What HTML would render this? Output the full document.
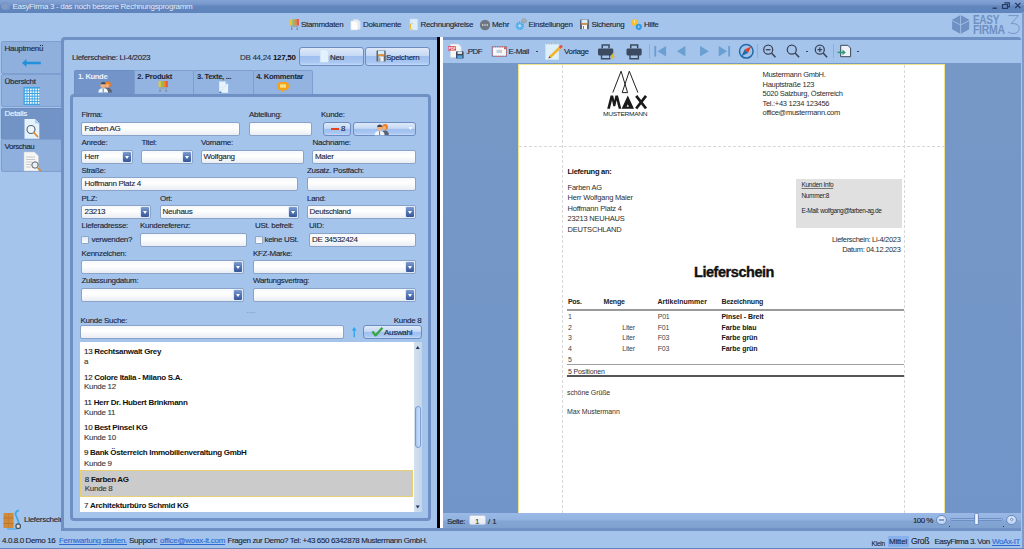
<!DOCTYPE html>
<html><head><meta charset="utf-8">
<style>
*,*::before,*::after{box-sizing:border-box}
html,body{margin:0;padding:0}
body{width:1024px;height:549px;overflow:hidden;position:relative;background:#a5c4ec;font-family:"Liberation Sans",sans-serif;font-size:8px;letter-spacing:-0.3px;color:#1c2636}
.a{position:absolute}
.t{position:absolute;line-height:10px;white-space:nowrap;-webkit-text-stroke:0.12px currentColor}
.b,b{font-weight:bold;-webkit-text-stroke:0}
.inp{position:absolute;height:14px;border:1px solid #89a3c9;border-radius:2px;background:linear-gradient(#f6f8fc,#ffffff 40%,#e9edf3)}
.cmb{position:absolute;height:14px;border:1px solid #89a3c9;border-radius:2px;background:linear-gradient(#f6f8fc,#ffffff 40%,#e9edf3)}
.cmb:after{content:"";position:absolute;right:0;top:0;width:10px;height:12px;background:linear-gradient(#7c9cd2,#5676b3 50%,#36569a);border:1px solid #dfe8f6;border-radius:2px}
.cmb:before{content:"";position:absolute;right:2.7px;top:5px;width:0;height:0;border-left:2.5px solid transparent;border-right:2.5px solid transparent;border-top:3px solid #fff;z-index:2}
.btn{position:absolute;border:1px solid #6d8dc2;border-radius:3px;background:linear-gradient(#dfe9f8,#c5d9f5 45%,#9fbff0 50%,#a9c7f2 85%,#c4daf7)}
.nav{position:absolute;left:1px;width:61px;height:33px;border:1px solid #7e9fd0;background:#8fafdd;border-radius:2px}
.ftab{position:absolute;top:70px;height:24px;border:1px solid #7d9dcf;border-bottom:none;background:#93b3e1;border-radius:2px 2px 0 0}
.pg{color:#2d2d2d;-webkit-text-stroke:0}
</style></head><body>

<!-- title bar -->
<div class="a" style="left:0;top:0;width:1024px;height:13px;background:linear-gradient(#84a3d5,#7898cc 32%,#6386be 48%,#5f83bb)"></div>
<div class="a" style="left:2px;top:2px;width:8px;height:8px;border-radius:50%;background:#7d9acb"></div>
<div class="t" style="left:12.5px;top:2px;color:#e2eaf6;-webkit-text-stroke:0">EasyFirma 3 - das noch bessere Rechnungsprogramm</div>
<!-- window controls -->
<svg class="a" style="left:988px;top:0" width="36" height="12" viewBox="988 0 36 12">
 <path d="M992.5 8.2 L996.8 8.2" stroke="#22395f" stroke-width="1.3"/>
 <path d="M1004.3 2.9 L1009.3 2.9 L1009.3 6.9 L1007.9 6.9" stroke="#22395f" stroke-width="1.1" fill="none"/>
 <rect x="1002.5" y="4.6" width="5" height="3.8" stroke="#22395f" stroke-width="1.1" fill="none"/>
 <path d="M1015.2 2.9 L1020.4 8.1 M1020.4 2.9 L1015.2 8.1" stroke="#22395f" stroke-width="1.3"/>
</svg>
<!-- right border -->
<div class="a" style="left:1022px;top:12px;width:2px;height:537px;background:#7b9bcc"></div>

<!-- menubar -->
<div class="t" style="left:301px;top:20.2px">Stammdaten</div>
<div class="t" style="left:363px;top:20.2px">Dokumente</div>
<div class="t" style="left:420.5px;top:20.2px;letter-spacing:-0.38px">Rechnungkreise</div>
<div class="t" style="left:492px;top:20.2px">Mehr</div>
<div class="t" style="left:528.5px;top:20.2px">Einstellungen</div>
<div class="t" style="left:591.5px;top:20.2px;letter-spacing:-0.35px">Sicherung</div>
<div class="t" style="left:644px;top:20.2px">Hilfe</div>

<!-- left nav -->
<div class="nav" style="top:41px"></div>
<div class="nav" style="top:74px"></div>
<div class="nav" style="top:107.5px;height:32px;background:#7293c6;border-color:#6a8bbf"></div>
<div class="nav" style="top:139px"></div>
<div class="t" style="left:4.5px;top:44px">Hauptmen<span style="position:relative">u<i style="position:absolute;left:0.9px;top:0.6px;width:1px;height:1px;background:#1c2636"></i><i style="position:absolute;left:2.9px;top:0.6px;width:1px;height:1px;background:#1c2636"></i></span></div>
<div class="t" style="left:4.5px;top:76.5px">Übersicht</div>
<div class="t" style="left:4.5px;top:109px;color:#f2f6fc">Details</div>
<div class="t" style="left:4.5px;top:141.5px;letter-spacing:-0.45px">Vorschau</div>
<div class="t" style="left:24px;top:514.5px">Lieferschein</div>

<!-- outer panel -->
<div class="a" style="left:61px;top:37px;width:390px;height:494px;border:3px solid #6f90c4;border-right:none;border-radius:4px 0 0 4px;background:#a5c4ec"></div>
<div class="t" style="left:72px;top:52.5px">Lieferscheine: Li-4/2023</div>
<div class="t" style="left:240px;top:52.5px;color:#2b3445">DB 44,24 <b style="color:#111">127,50</b></div>
<div class="btn" style="left:299px;top:47px;width:65px;height:19px"></div>
<div class="t" style="left:330px;top:52.5px">Neu</div>
<div class="btn" style="left:365px;top:47px;width:65px;height:19px"></div>
<div class="t" style="left:386px;top:52.5px">Speichern</div>

<!-- form tabs -->
<div class="ftab" style="left:74px;width:61px;top:69.5px;background:#7394c8;border-color:#6d8ec2;height:25px"></div>
<div class="ftab" style="left:134px;width:60px"></div>
<div class="ftab" style="left:193px;width:61px"></div>
<div class="ftab" style="left:253px;width:60px"></div>
<div class="t b" style="left:78px;top:71.6px;font-size:7.6px;letter-spacing:-0.35px;color:#eaf2ff">1. Kunde</div>
<div class="t b" style="left:137.3px;top:71.6px;font-size:7.6px;letter-spacing:-0.25px">2. Produkt</div>
<div class="t b" style="left:197px;top:71.6px;font-size:7.6px;letter-spacing:-0.33px">3. Texte, ...</div>
<div class="t b" style="left:256.2px;top:71.6px;font-size:7.6px;letter-spacing:-0.3px">4. Kommentar</div>

<!-- inner panel -->
<div class="a" style="left:70px;top:94px;width:361px;height:427px;border:3px solid #6f90c4;border-radius:4px;background:#a5c4ec"></div>


<!-- form labels -->
<div class="t" style="left:81.5px;top:109.8px">Firma:</div>
<div class="t" style="left:249px;top:109.8px">Abteilung:</div>
<div class="t" style="left:321px;top:109.8px">Kunde:</div>
<div class="inp" style="left:81px;top:122px;width:159px"></div>
<div class="t" style="left:84.5px;top:124.3px">Farben AG</div>
<div class="inp" style="left:248.5px;top:122px;width:63px"></div>
<div class="btn" style="left:323px;top:122px;width:28px;height:14px"></div>
<div class="a" style="left:330.5px;top:127.5px;width:8px;height:2px;background:#e2441e"></div>
<div class="t" style="left:341px;top:124.3px">8</div>
<div class="btn" style="left:353px;top:122px;width:63px;height:14px"></div>
<div class="t" style="left:81.5px;top:137.8px">Anrede:</div>
<div class="t" style="left:141.5px;top:137.8px">Titel:</div>
<div class="t" style="left:201px;top:137.8px">Vorname:</div>
<div class="t" style="left:312.5px;top:137.8px">Nachname:</div>
<div class="cmb" style="left:81px;top:150px;width:52px"></div>
<div class="t" style="left:84.5px;top:152.3px">Herr</div>
<div class="cmb" style="left:141px;top:150px;width:52px"></div>
<div class="inp" style="left:200.5px;top:150px;width:103px"></div>
<div class="t" style="left:203.5px;top:152.3px">Wolfgang</div>
<div class="inp" style="left:312px;top:150px;width:104px"></div>
<div class="t" style="left:315px;top:152.3px">Maier</div>
<div class="t" style="left:81.5px;top:165.8px">Straße:</div>
<div class="t" style="left:307px;top:165.8px">Zusatz. Postfach:</div>
<div class="inp" style="left:81px;top:177px;width:217px"></div>
<div class="t" style="left:84.5px;top:179.3px">Hoffmann Platz 4</div>
<div class="inp" style="left:306.5px;top:177px;width:109px"></div>
<div class="t" style="left:81.5px;top:193.8px">PLZ:</div>
<div class="t" style="left:160px;top:193.8px">Ort:</div>
<div class="t" style="left:307px;top:193.8px">Land:</div>
<div class="cmb" style="left:81px;top:205px;width:70px"></div>
<div class="t" style="left:84.5px;top:207.3px">23213</div>
<div class="cmb" style="left:159.5px;top:205px;width:139px"></div>
<div class="t" style="left:162.5px;top:207.3px">Neuhaus</div>
<div class="cmb" style="left:306.5px;top:205px;width:109px"></div>
<div class="t" style="left:309.5px;top:207.3px">Deutschland</div>
<div class="t" style="left:81.5px;top:220.8px">Lieferadresse:</div>
<div class="t" style="left:140px;top:220.8px">Kundereferenz:</div>
<div class="t" style="left:255px;top:220.8px">USt. befreit:</div>
<div class="t" style="left:309px;top:220.8px">UID:</div>
<div class="a" style="left:81px;top:236px;width:8px;height:8px;border:1px solid #8ea6c8;border-radius:1px;background:linear-gradient(#e3e9f2,#fbfcfe)"></div>
<div class="t" style="left:91.5px;top:235.3px">verwenden?</div>
<div class="inp" style="left:139.5px;top:233px;width:107.5px"></div>
<div class="a" style="left:255px;top:236px;width:8px;height:8px;border:1px solid #8ea6c8;border-radius:1px;background:linear-gradient(#e3e9f2,#fbfcfe)"></div>
<div class="t" style="left:264.5px;top:235.3px">keine USt.</div>
<div class="inp" style="left:309px;top:233px;width:106.5px"></div>
<div class="t" style="left:312px;top:235.3px">DE 34532424</div>
<div class="t" style="left:81.5px;top:248.8px">Kennzeichen:</div>
<div class="t" style="left:253px;top:248.8px">KFZ-Marke:</div>
<div class="cmb" style="left:81px;top:260px;width:163px"></div>
<div class="cmb" style="left:252.5px;top:260px;width:163px"></div>
<div class="t" style="left:81.5px;top:275.8px">Zulassungdatum:</div>
<div class="t" style="left:253px;top:275.8px">Wartungsvertrag:</div>
<div class="cmb" style="left:81px;top:288px;width:163px"></div>
<div class="cmb" style="left:252.5px;top:288px;width:163px"></div>

<div class="t" style="left:246.5px;top:305.6px;color:#7b8ca6;letter-spacing:0">....</div>

<div class="t" style="left:80.5px;top:315.7px">Kunde Suche:</div>
<div class="t" style="left:421.5px;top:315.7px;transform:translateX(-100%)">Kunde 8</div>
<div class="inp" style="left:79.5px;top:325px;width:264px"></div>
<div class="btn" style="left:363px;top:325px;width:59px;height:14px"></div>
<div class="t" style="left:384px;top:327.7px">Auswahl</div>

<!-- list -->
<div class="a" style="left:80px;top:342px;width:341.5px;height:170px;background:#fff;overflow:hidden">
  <div class="a" style="left:334px;top:0;width:7.5px;height:170px;background:linear-gradient(90deg,#d3e0ee,#c5d6ea)"></div>
  <div class="a" style="left:335px;top:64px;width:5.5px;height:42px;border:1px solid #7a9bd0;border-radius:3px;background:linear-gradient(90deg,#a9c6f0,#cfe0f7)"></div>
  <div class="a" style="left:0;top:128.2px;width:333px;height:27px;background:#cbcbcb;border:1px solid #e8cf74"></div>
  <div class="t" style="left:4.0px;top:4.8px;color:#222">13 <b style="color:#111">Rechtsanwalt Grey</b></div>
  <div class="t" style="left:4.0px;top:14.8px;color:#3a3a3a">a</div>
  <div class="t" style="left:4.0px;top:30.8px;color:#222">12 <b style="color:#111">Colore Italia - Milano S.A.</b></div>
  <div class="t" style="left:4.0px;top:39.8px;color:#3a3a3a">Kunde 12</div>
  <div class="t" style="left:4.0px;top:55.8px;color:#222">11 <b style="color:#111">Herr Dr. Hubert Brinkmann</b></div>
  <div class="t" style="left:4.0px;top:65.8px;color:#3a3a3a">Kunde 11</div>
  <div class="t" style="left:4.0px;top:80.8px;color:#222">10 <b style="color:#111">Best Pinsel KG</b></div>
  <div class="t" style="left:4.0px;top:90.8px;color:#3a3a3a">Kunde 10</div>
  <div class="t" style="left:4.0px;top:105.8px;color:#222">9 <b style="color:#111">Bank Österreich Immobilienveraltung GmbH</b></div>
  <div class="t" style="left:4.0px;top:116.8px;color:#3a3a3a">Kunde 9</div>
  <div class="t" style="left:4.8px;top:132.8px;color:#222">8 <b style="color:#111">Farben AG</b></div>
  <div class="t" style="left:4.8px;top:141.8px;color:#3a3a3a">Kunde 8</div>
  <div class="t" style="left:4.0px;top:158.8px;color:#222">7 <b style="color:#111">Architekturbüro Schmid KG</b></div>
  <div class="t" style="left:4.0px;top:167.8px;color:#3a3a3a">Kunde 7</div>
</div>

<!-- right panel -->
<div class="a" style="left:437px;top:37px;width:3px;height:491px;background:#000"></div>
<div class="a" style="left:440px;top:37px;width:3px;height:491px;background:#fff"></div>
<div class="a" style="left:443px;top:37px;width:578px;height:3px;background:#6f90c4;border-radius:0 3px 0 0"></div>
<div class="a" style="left:443px;top:63px;width:578px;height:450px;background:linear-gradient(#7698c7,#7195c8)"></div>
<div class="a" style="left:518px;top:64px;width:427px;height:449px;background:#fff;border:1px solid #f2e48e;border-bottom:none"></div>

<!-- document -->
<div class="a" style="left:562px;top:65px;width:0;height:448px;border-left:1px dashed #d8d8d8"></div>
<div class="a" style="left:904px;top:65px;width:0;height:448px;border-left:1px dashed #d8d8d8"></div>
<div class="a" style="left:519px;top:146px;width:426px;height:0;border-top:1px dashed #d8d8d8"></div>
<div class="t pg" style="left:762.5px;top:70px;font-size:7.5px;line-height:9.6px;letter-spacing:-0.28px">Mustermann GmbH.<br>Hauptstraße 123<br>5020 Salzburg, Österreich<br>Tel.:+43 1234 123456<br>office@mustermann.com</div>
<div class="t pg b" style="left:567.5px;top:167px;font-size:7.5px;letter-spacing:-0.27px;color:#111">Lieferung an:</div>
<div class="t pg" style="left:567.5px;top:182.5px;font-size:7.5px;line-height:10.55px;letter-spacing:-0.2px">Farben AG<br>Herr Wolfgang Maier<br>Hoffmann Platz 4<br>23213 NEUHAUS<br>DEUTSCHLAND</div>
<div class="a" style="left:796px;top:179px;width:106px;height:49px;background:#e0e0e0"></div>
<div class="t" style="-webkit-text-stroke:0;left:801.5px;top:179.6px;font-size:6.5px;letter-spacing:-0.3px;color:#222;text-decoration:underline;text-decoration-thickness:0.6px;text-decoration-color:#777;text-underline-offset:1px">Kunden Info</div>
<div class="t" style="-webkit-text-stroke:0;left:801.5px;top:191px;font-size:6.5px;letter-spacing:-0.35px;color:#222">Nummer:8</div>
<div class="t" style="-webkit-text-stroke:0;left:801.5px;top:206.4px;font-size:6.5px;letter-spacing:-0.4px;color:#222">E-Mail: wolfgang@farben-ag.de</div>
<div class="t pg" style="left:900.5px;top:234.5px;font-size:7.5px;line-height:10.7px;letter-spacing:-0.32px;text-align:right;transform:translateX(-100%)">Lieferschein: Li-4/2023<br>Datum: 04.12.2023</div>
<div class="t" style="left:694px;top:263.5px;font-size:14.5px;font-weight:bold;line-height:16px;letter-spacing:-0.45px;color:#111;-webkit-text-stroke:0.35px #111">Lieferschein</div>
<div class="t b" style="left:568px;top:296.5px;font-size:7px;letter-spacing:-0.3px;color:#222">Pos.</div>
<div class="t b" style="left:603.5px;top:296.5px;font-size:7px;letter-spacing:-0.2px;color:#222">Menge</div>
<div class="t b" style="left:657.5px;top:296.5px;font-size:7px;letter-spacing:0px;color:#222">Artikelnummer</div>
<div class="t b" style="left:721.5px;top:296.5px;font-size:7px;letter-spacing:-0.18px;color:#222">Bezeichnung</div>
<div class="a" style="left:567px;top:309px;width:337px;height:2px;background:#9a9a9a"></div>
<div class="t pg" style="left:568px;top:311.8px;font-size:7px;color:#444">1</div>
<div class="t pg" style="left:657.7px;top:311.8px;font-size:7px;color:#444;letter-spacing:-0.2px">P01</div>
<div class="t b" style="left:721.5px;top:311.8px;font-size:7px;color:#151515;letter-spacing:-0.05px">Pinsel - Breit</div>
<div class="t pg" style="left:568px;top:322.5px;font-size:7px;color:#444">2</div>
<div class="t pg" style="left:622.3px;top:322.5px;font-size:7px;color:#444;letter-spacing:-0.2px">Liter</div>
<div class="t pg" style="left:657.7px;top:322.5px;font-size:7px;color:#444;letter-spacing:-0.2px">F01</div>
<div class="t b" style="left:721.5px;top:322.5px;font-size:7px;color:#151515;letter-spacing:-0.05px">Farbe blau</div>
<div class="t pg" style="left:568px;top:333.3px;font-size:7px;color:#444">3</div>
<div class="t pg" style="left:622.3px;top:333.3px;font-size:7px;color:#444;letter-spacing:-0.2px">Liter</div>
<div class="t pg" style="left:657.7px;top:333.3px;font-size:7px;color:#444;letter-spacing:-0.2px">F03</div>
<div class="t b" style="left:721.5px;top:333.3px;font-size:7px;color:#151515;letter-spacing:-0.05px">Farbe grün</div>
<div class="t pg" style="left:568px;top:344.0px;font-size:7px;color:#444">4</div>
<div class="t pg" style="left:622.3px;top:344.0px;font-size:7px;color:#444;letter-spacing:-0.2px">Liter</div>
<div class="t pg" style="left:657.7px;top:344.0px;font-size:7px;color:#444;letter-spacing:-0.2px">F03</div>
<div class="t b" style="left:721.5px;top:344.0px;font-size:7px;color:#151515;letter-spacing:-0.05px">Farbe grün</div>
<div class="t pg" style="left:568px;top:354.8px;font-size:7px;color:#444">5</div>
<div class="a" style="left:567px;top:364px;width:337px;height:1px;background:#a0a0a0"></div>
<div class="t pg" style="left:568px;top:366.5px;font-size:7px;letter-spacing:-0.15px;color:#333">5 Positionen</div>
<div class="a" style="left:567px;top:375px;width:337px;height:2px;background:#555"></div>
<div class="t pg" style="left:567px;top:388px;font-size:7px;letter-spacing:-0.1px;color:#333">schöne Grüße</div>
<div class="t pg" style="left:567px;top:407.3px;font-size:7px;letter-spacing:-0.1px;color:#333">Max Mustermann</div>
<div class="a" style="left:443px;top:513px;width:578px;height:15px;background:linear-gradient(#9ab9e6,#92b2e0 45%,#83a5d3 55%,#7ea1cf)"></div>
<div class="a" style="left:61px;top:528px;width:960px;height:3px;background:#6f90c4"></div>
<div class="a" style="left:0;top:548px;width:1024px;height:1px;background:#6284bb"></div>


<!-- right toolbar texts -->
<div class="t" style="left:466px;top:47.3px;letter-spacing:-0.55px">.PDF</div>
<div class="t" style="left:508.5px;top:47.3px;letter-spacing:-0.4px">E-Mail</div>
<div class="a" style="left:536px;top:51px;width:2px;height:1px;background:#3a4a60"></div>
<div class="t" style="left:564px;top:47.3px;letter-spacing:-0.35px">Vorlage</div>
<div class="a" style="left:806px;top:51px;width:2px;height:1px;background:#3a4a60"></div>
<div class="a" style="left:857px;top:51px;width:2px;height:1px;background:#3a4a60"></div>
<div class="a" style="left:649px;top:44px;width:1px;height:14px;background:#8eacd8"></div>
<div class="a" style="left:757px;top:44px;width:1px;height:14px;background:#8eacd8"></div>
<div class="a" style="left:833px;top:44px;width:1px;height:14px;background:#8eacd8"></div>

<!-- status strip -->
<div class="t" style="left:447px;top:516.5px;font-size:8px;letter-spacing:-0.4px">Seite:</div>
<div class="a" style="left:468.5px;top:515px;width:17px;height:10px;border:1px solid #b9cbe3;border-radius:2px;background:linear-gradient(#f4f6fa,#e6eaf0)"></div>
<div class="t" style="left:475px;top:516.5px;font-size:8px;color:#444">1</div>
<div class="t" style="left:488px;top:516.5px;font-size:8px;letter-spacing:-0.1px">/ 1</div>
<div class="t" style="left:913px;top:516px;font-size:8px;letter-spacing:-0.6px">100 %</div>
<div class="a" style="left:936.4px;top:514.6px;width:10.6px;height:10.6px;border-radius:50%;border:1px solid #6d8dc4;background:radial-gradient(circle at 50% 35%,#eef4fc,#b8cff0 70%,#9ab8e6)"></div>
<div class="a" style="left:939.2px;top:519.4px;width:5px;height:1.2px;background:#7f9cc8"></div>
<div class="a" style="left:949.7px;top:518px;width:53.3px;height:3.2px;border-radius:2px;border:1px solid #6f8fc4;background:#98b6e2"></div>
<div class="a" style="left:949px;top:525.5px;width:1px;height:1px;background:#333"></div>
<div class="a" style="left:1002.5px;top:525.5px;width:1px;height:1px;background:#333"></div>
<div class="a" style="left:974.4px;top:513.3px;width:4.4px;height:11.5px;border:1px solid #7391c6;border-radius:1.5px;background:linear-gradient(90deg,#c9dbf5,#f2f7fd,#c9dbf5)"></div>
<div class="a" style="left:1006px;top:514.6px;width:10.6px;height:10.6px;border-radius:50%;border:1px solid #6d8dc4;background:radial-gradient(circle at 50% 35%,#eef4fc,#b8cff0 70%,#9ab8e6)"></div>
<div class="a" style="left:1009.6px;top:518.2px;width:3.4px;height:3.4px;border:1px solid #7f9cc8;background:#f4f8fd;transform:rotate(45deg)"></div>

<!-- bottom status bar -->
<div class="t" style="left:2px;top:536px;font-size:8px;letter-spacing:-0.39px">4.0.8.0 Demo 16</div>
<div class="t" style="left:59px;top:536px;font-size:8px;letter-spacing:-0.29px;color:#2e6ad2;text-decoration:underline">Fernwartung starten.</div>
<div class="t" style="left:129px;top:536px;font-size:8px;letter-spacing:-0.23px">Support:</div>
<div class="t" style="left:160px;top:536px;font-size:8px;letter-spacing:-0.26px;color:#2e6ad2;text-decoration:underline">office@woax-it.com</div>
<div class="t" style="left:227.5px;top:536px;font-size:8px;letter-spacing:-0.38px">Fragen zur Demo? Tel: +43 650 6342878 Mustermann GmbH.</div>
<div class="a" style="left:887.5px;top:535.5px;width:21px;height:11.5px;background:#87b1ea"></div>
<div class="t" style="left:871.5px;top:538.5px;font-size:6.5px;letter-spacing:-0.19px">Klein</div>
<div class="t" style="left:889px;top:537px;font-size:8px;letter-spacing:-0.18px">Mittel</div>
<div class="t" style="left:911px;top:536px;font-size:8.6px;letter-spacing:-0.35px">Groß</div>
<div class="t" style="left:934.5px;top:537px;font-size:8px;letter-spacing:-0.5px">EasyFirma 3. Von</div>
<div class="t" style="left:992px;top:537px;font-size:8px;letter-spacing:-0.42px;color:#2e6ad2;text-decoration:underline">WoAx-IT</div>

<svg class="a" style="left:0;top:0" width="1024" height="549" viewBox="0 0 1024 549">
<!-- title app icon -->
<circle cx="4.8" cy="6.2" r="3.6" fill="#7f9bc6" stroke="#7390bf" stroke-width="0.6"/>
<!-- menubar icons -->
<g>
 <rect x="290" y="19.5" width="2.3" height="6" fill="#f1c232"/><rect x="292.3" y="19.5" width="2.2" height="6" fill="#8cc152"/><rect x="294.5" y="19" width="2.2" height="6.5" fill="#f08a24"/><rect x="296.7" y="19" width="2.2" height="6.5" fill="#e9573f"/>
 <path d="M290 25.5 L299 25.5 L298 27 L291 27 Z" fill="#9aa3ad"/>
 <rect x="291" y="27.5" width="1.3" height="2.5" fill="#7c8590"/><rect x="296.5" y="27.5" width="1.3" height="2.5" fill="#7c8590"/>
</g>
<g>
 <path d="M353 19.5 L358 19.5 L360.3 22 L360.3 29.3 L353 29.3 Z" fill="#e9eef5" stroke="#c9d3e0" stroke-width="0.5"/>
 <path d="M350.8 21 L355.8 21 L358 23.5 L358 30 L350.8 30 Z" fill="#fdfdfd" stroke="#ccd5e2" stroke-width="0.5"/>
</g>
<g>
 <rect x="410" y="19" width="7.7" height="11" fill="#ddeefb" stroke="#c8dcef" stroke-width="0.5"/>
 <path d="M413.5 23.2 A3.4 3.4 0 1 0 413.5 29.8 A2.6 3.2 0 1 1 413.5 23.2 Z" fill="#f2b81e"/>
</g>
<g>
 <circle cx="485" cy="25" r="5.2" fill="#6e7783"/>
 <circle cx="482.8" cy="25" r="0.7" fill="#fff"/><circle cx="485" cy="25" r="0.7" fill="#fff"/><circle cx="487.2" cy="25" r="0.7" fill="#fff"/>
</g>
<g>
 <circle cx="524" cy="20.8" r="2.4" fill="#a5acb5" stroke="#8d949d" stroke-width="0.8" stroke-dasharray="1 0.6"/>
 <circle cx="519.8" cy="25.8" r="3.1" fill="none" stroke="#3aa6e8" stroke-width="2.2" stroke-dasharray="1.2 0.7"/>
 <circle cx="519.8" cy="25.8" r="2.2" fill="none" stroke="#54b6f0" stroke-width="1.3"/>
 <circle cx="519.8" cy="25.8" r="1" fill="#d6eefc"/>
</g>
<g>
 <rect x="580" y="19.5" width="9" height="9.8" rx="0.8" fill="#5b6675"/>
 <rect x="581.5" y="19.8" width="6" height="3.6" fill="#d9ecfa"/>
 <rect x="581.3" y="23.3" width="6.4" height="1.4" fill="#ec8a26"/>
 <rect x="582" y="24.8" width="5" height="4.5" fill="#f3f6f9"/>
 <rect x="583" y="26" width="0.8" height="3" fill="#5b6675"/>
</g>
<g>
 <circle cx="634.5" cy="22.5" r="3.3" fill="#f6c12b"/>
 <circle cx="638.8" cy="26.8" r="3.1" fill="#2f9ae6"/>
 <rect x="634.2" y="20.5" width="0.7" height="2.2" fill="#fff"/>
 <rect x="638.5" y="25.6" width="0.7" height="2.4" fill="#fff"/>
</g>

<!-- EASY FIRMA 3 logo -->
<g fill="#6e90c2">
 <path d="M960.6 15 L969.2 19.7 L969.2 29.2 L960.6 33.9 L952.1 29.2 L952.1 19.7 Z"/>
 <path d="M960.6 15 L960.6 33.9 M952.1 20.6 L960.6 25 L969.2 20.6" stroke="#a3c2ea" stroke-width="0.9" fill="none"/>
 <text x="972.9" y="23.9" font-family="Liberation Sans" font-weight="bold" font-size="12.2" textLength="26.3" lengthAdjust="spacingAndGlyphs">EASY</text>
 <text x="972.9" y="33.7" font-family="Liberation Sans" font-weight="bold" font-size="12.2" textLength="31.9" lengthAdjust="spacingAndGlyphs">FIRMA</text>
 <path d="M1008.3 15.6 L1018.4 15.6 L1011.2 23.6 Q1019.5 23 1019.2 28.6 Q1018.8 33.6 1013 33.5 Q1009.8 33.4 1008.1 32" stroke="#6e90c2" stroke-width="0.9" fill="none"/>
</g>

<!-- nav icons -->
<path d="M26.5 59 L22 63 L26.5 67 L26.5 64.2 L40.8 64.2 L40.8 61.8 L26.5 61.8 Z" fill="#2290da"/>
<rect x="23.5" y="87" width="16.4" height="18" fill="#39a3e3"/>
<g fill="#f2f9ff">
<rect x="24.8" y="88.6" width="1.7" height="1.7"/><rect x="24.8" y="91.3" width="1.7" height="1.7"/><rect x="24.8" y="94.0" width="1.7" height="1.7"/><rect x="24.8" y="96.7" width="1.7" height="1.7"/><rect x="24.8" y="99.4" width="1.7" height="1.7"/><rect x="24.8" y="102.1" width="1.7" height="1.7"/><rect x="27.4" y="88.6" width="1.7" height="1.7"/><rect x="27.4" y="91.3" width="1.7" height="1.7"/><rect x="27.4" y="94.0" width="1.7" height="1.7"/><rect x="27.4" y="96.7" width="1.7" height="1.7"/><rect x="27.4" y="99.4" width="1.7" height="1.7"/><rect x="27.4" y="102.1" width="1.7" height="1.7"/><rect x="30.0" y="88.6" width="1.7" height="1.7"/><rect x="30.0" y="91.3" width="1.7" height="1.7"/><rect x="30.0" y="94.0" width="1.7" height="1.7"/><rect x="30.0" y="96.7" width="1.7" height="1.7"/><rect x="30.0" y="99.4" width="1.7" height="1.7"/><rect x="30.0" y="102.1" width="1.7" height="1.7"/><rect x="32.6" y="88.6" width="1.7" height="1.7"/><rect x="32.6" y="91.3" width="1.7" height="1.7"/><rect x="32.6" y="94.0" width="1.7" height="1.7"/><rect x="32.6" y="96.7" width="1.7" height="1.7"/><rect x="32.6" y="99.4" width="1.7" height="1.7"/><rect x="32.6" y="102.1" width="1.7" height="1.7"/><rect x="35.2" y="88.6" width="1.7" height="1.7"/><rect x="35.2" y="91.3" width="1.7" height="1.7"/><rect x="35.2" y="94.0" width="1.7" height="1.7"/><rect x="35.2" y="96.7" width="1.7" height="1.7"/><rect x="35.2" y="99.4" width="1.7" height="1.7"/><rect x="35.2" y="102.1" width="1.7" height="1.7"/><rect x="37.8" y="88.6" width="1.7" height="1.7"/><rect x="37.8" y="91.3" width="1.7" height="1.7"/><rect x="37.8" y="94.0" width="1.7" height="1.7"/><rect x="37.8" y="96.7" width="1.7" height="1.7"/><rect x="37.8" y="99.4" width="1.7" height="1.7"/><rect x="37.8" y="102.1" width="1.7" height="1.7"/>
</g>
<path d="M24.5 119 L35 119 L39.3 123.5 L39.3 138.8 L24.5 138.8 Z" fill="#e3f2fc"/>
<path d="M35 119 L35 123.5 L39.3 123.5 Z" fill="#a9d6f5"/>
<circle cx="31" cy="129.5" r="4" fill="#eef6fc" stroke="#59636e" stroke-width="1.1"/>
<path d="M33.8 132.5 L37.5 136.5" stroke="#e08a2a" stroke-width="1.8" stroke-linecap="round"/>
<path d="M24 152 L34.5 152 L38.5 156 L38.5 170.9 L24 170.9 Z" fill="#f6f6f6" stroke="#c8c8c8" stroke-width="0.5"/>
<g stroke="#b5b5b5" stroke-width="0.7"><path d="M26 157 L35 157 M26 159.5 L35 159.5 M26 162 L32 162 M26 164.5 L31 164.5 M26 167 L31 167"/></g>
<circle cx="35" cy="165" r="3.2" fill="#e9f1f8" stroke="#59636e" stroke-width="1"/>
<path d="M37.3 167.5 L40.5 170.5" stroke="#d08a36" stroke-width="1.6" stroke-linecap="round"/>

<!-- Lieferschein dolly -->
<rect x="3.5" y="513" width="10" height="15" fill="#d08a3a"/>
<path d="M3.5 518 L13.5 518 M3.5 523.5 L13.5 523.5" stroke="#b06c26" stroke-width="0.7"/>
<path d="M8.5 513 L8.5 528" stroke="#c07a30" stroke-width="0.6"/>
<path d="M18.8 510.4 Q15.2 511.5 15.6 514.5 L18.6 522 L18.6 525" stroke="#3aa8e6" stroke-width="1.7" fill="none"/>
<path d="M7 529 L17 529" stroke="#3aa8e6" stroke-width="1.1"/>
<circle cx="18.2" cy="526.2" r="2.3" fill="#d9dee3" stroke="#4a545e" stroke-width="1.2"/>

<!-- form tab icons -->
<g>
 <circle cx="108" cy="84.5" r="2.9" fill="#ef7c20"/><ellipse cx="107.3" cy="85.6" rx="1.7" ry="2" fill="#f4b07a"/>
 <path d="M104 92.5 Q104 88 108 88 Q112 88 112 92.5 Z" fill="#5a6470"/>
 <circle cx="103.2" cy="85.3" r="2.7" fill="#f4b07a"/>
 <path d="M100.6 84.3 Q101 82 103.3 82 Q105.6 82 105.9 84.3 Z" fill="#3a4a5c"/>
 <path d="M98.3 92.6 Q98.3 88.3 103.2 88.3 Q108.1 88.3 108.1 92.6 Z" fill="#f4f7fa"/>
 <rect x="102.7" y="88.5" width="1" height="4" fill="#2d8fd8"/>
</g>
<g>
 <rect x="158.6" y="81.2" width="2.3" height="6" fill="#f1c232"/><rect x="160.9" y="81.2" width="2.3" height="6" fill="#8cc152"/><rect x="163.2" y="81" width="2.3" height="6.2" fill="#f08a24"/><rect x="165.5" y="81" width="2.3" height="6.2" fill="#e9573f"/>
 <path d="M158.5 87.2 L168 87.2 L167 88.8 L159.5 88.8 Z" fill="#9aa3ad"/>
 <rect x="159.5" y="89.5" width="1.2" height="2.4" fill="#7c8590"/><rect x="165.5" y="89.5" width="1.2" height="2.4" fill="#7c8590"/>
</g>
<g>
 <path d="M219.2 81.6 L225.5 81.6 L228.1 84.2 L228.1 92.8 L219.2 92.8 Z" fill="#e8f4fd"/>
 <path d="M225.5 81.6 L225.5 84.2 L228.1 84.2 Z" fill="#7fc4f0"/>
 <path d="M220.5 88 L226 86 M220.5 90 L224 89" stroke="#c3dff3" stroke-width="0.6"/>
 <rect x="219.2" y="91.6" width="2.2" height="1.2" fill="#3a6b98"/>
</g>
<g>
 <rect x="277" y="82" width="12" height="8.2" rx="4" fill="#f4a21a"/>
 <path d="M281 89.5 L284.5 89.5 L282.2 92.4 Z" fill="#f4a21a"/>
 <rect x="280" y="84.3" width="6" height="3.4" fill="#fbe08a"/>
</g>

<!-- Neu / Speichern icons -->
<path d="M320.2 49.6 L326 49.6 L328.3 52 L328.3 62.3 L320.2 62.3 Z" fill="#e4f2fd" stroke="#c5dff4" stroke-width="0.5"/>
<g>
 <rect x="376.5" y="50.5" width="9.2" height="11" rx="0.6" fill="#5b6675"/>
 <rect x="378" y="50.8" width="6.2" height="3.8" fill="#d9ecfa"/>
 <rect x="377.8" y="54.5" width="6.6" height="1.6" fill="#ec8a26"/>
 <rect x="378.5" y="56.3" width="5.2" height="5.2" fill="#f3f6f9"/>
 <rect x="379.4" y="57.5" width="0.9" height="3.8" fill="#5b6675"/>
</g>

<!-- Kunde dropdown people icon + triangle -->
<g>
 <circle cx="385" cy="127" r="2.9" fill="#ef7c20"/><ellipse cx="384.3" cy="128.1" rx="1.7" ry="2" fill="#f4b07a"/>
 <path d="M381.3 135 Q381.3 130.5 385 130.5 Q388.8 130.5 388.8 135 Z" fill="#5a6470"/>
 <circle cx="379.6" cy="128" r="2.7" fill="#f4b07a"/>
 <path d="M377 127 Q377.4 124.6 379.7 124.6 Q382 124.6 382.3 127 Z" fill="#3a4a5c"/>
 <path d="M374.6 135.2 Q374.6 131 379.6 131 Q384.6 131 384.6 135.2 Z" fill="#f4f7fa"/>
 <rect x="379.1" y="131.2" width="1" height="4" fill="#2d8fd8"/>
</g>
<path d="M408.6 127.3 L412.3 127.3 L410.45 130 Z" fill="#ffffff"/>

<!-- up arrow + check -->
<path d="M354.2 327 L351.8 330.5 L353.6 330.5 L353.6 337.3 L354.9 337.3 L354.9 330.5 L356.6 330.5 Z" fill="#2aa6ea"/>
<path d="M372.4 331.6 L375.6 335.4 L382.4 327.8" stroke="#3aa53e" stroke-width="2.3" fill="none" stroke-linejoin="round"/>

<!-- scrollbar arrows -->
<path d="M415.7 349 L419.7 349 L417.7 346 Z" fill="#23375e"/>
<path d="M415.7 505.5 L419.7 505.5 L417.7 508.5 Z" fill="#23375e"/>

<!-- right toolbar icons -->
<g>
 <path d="M450.3 44 L458.5 44 L461.2 46.8 L461.2 57.6 L450.3 57.6 Z" fill="#f5f6f8" stroke="#c7ccd3" stroke-width="0.5"/>
 <rect x="448" y="46.3" width="8" height="4.3" rx="0.5" fill="#d9393a"/>
 <text x="448.6" y="49.9" font-family="Liberation Sans" font-weight="bold" font-size="3.6" fill="#fff" letter-spacing="0">PDF</text>
 <rect x="456" y="51.3" width="7.6" height="7.3" rx="0.6" fill="#3f4b5e"/>
 <rect x="457.6" y="51.5" width="4.4" height="2.4" fill="#e4e8ee"/>
 <rect x="457.3" y="55.4" width="5" height="2.8" fill="#4aa8e8"/>
</g>
<g>
 <rect x="492.3" y="46.8" width="14.2" height="9.5" fill="#f7f8fa" stroke="#6a8ccc" stroke-width="1"/><rect x="492.3" y="46.8" width="14.2" height="9.5" fill="none" stroke="#d85a50" stroke-width="1" stroke-dasharray="1.2 1.2"/>
 <rect x="496.5" y="49.8" width="5.5" height="3.2" fill="#c6cdd8"/>
 <rect x="504" y="47.2" width="2" height="2" fill="#e05a4a"/>
</g>
<g>
 <rect x="545.4" y="43.5" width="13.5" height="16.2" fill="#dceffc"/>
 <path d="M546 43.8 L558.5 43.8" stroke="#8a97a6" stroke-width="1" stroke-dasharray="0.8 0.9"/>
 <path d="M549.8 57.2 L560.8 46.8" stroke="#f4b52a" stroke-width="2.6"/>
 <path d="M559.6 47.9 L562 45.6" stroke="#e8533a" stroke-width="2.6"/>
 <path d="M548.4 58.6 L549.2 56.2 L550.8 57.8 Z" fill="#4a4a4a"/>
</g>
<g fill="#3b4a5e">
 <path d="M601.5 44.3 L609.8 44.3 L609.8 48.3 L608.3 48.3 L608.3 45.8 L603 45.8 L603 48.3 L601.5 48.3 Z"/>
 <rect x="598" y="48.6" width="15.3" height="6.8" rx="1.3"/>
 <path d="M601.5 53.8 L609.8 53.8 L609.8 58.8 L601.5 58.8 Z" fill="none" stroke="#3b4a5e" stroke-width="1.4"/>
 <path d="M613 53.2 L609.8 57.4 L612 57.4 L610.4 60.6 L615.6 56 L613.4 56 L615.2 53.2 Z" fill="#e2b620" stroke="#a5c3ea" stroke-width="0.5"/>
</g>
<g fill="#3b4a5e">
 <path d="M630 44.3 L638.4 44.3 L638.4 48.3 L636.9 48.3 L636.9 45.8 L631.5 45.8 L631.5 48.3 L630 48.3 Z"/>
 <rect x="626.5" y="48.6" width="15.2" height="6.8" rx="1.3"/>
 <path d="M630 53.8 L638.4 53.8 L638.4 58.8 L630 58.8 Z" fill="none" stroke="#3b4a5e" stroke-width="1.4"/>
</g>
<g fill="#6a9fd2">
 <rect x="654.3" y="45.9" width="1.9" height="10.7"/>
 <path d="M657.5 51.25 L666.1 45.9 L666.1 56.6 Z"/>
 <path d="M676.9 51.25 L685.4 45.9 L685.4 56.6 Z"/>
 <path d="M708.9 51.25 L700 45.9 L700 56.6 Z"/>
 <path d="M727.1 51.25 L718.7 45.9 L718.7 56.6 Z"/>
 <rect x="728.2" y="45.9" width="1.9" height="10.7"/>
</g>
<g>
 <circle cx="746.3" cy="51.3" r="6.8" fill="#a4c2ea" stroke="#1f6aa8" stroke-width="1.5"/>
 <path d="M751.2 46.4 L748 53 L744.6 49.6 Z" fill="#e0401e"/>
 <path d="M741.4 56.2 L744.6 49.6 L748 53 Z" fill="#1f6aa8"/>
</g>
<g stroke="#3b4658" fill="none" stroke-width="1.3">
 <circle cx="768.2" cy="49.7" r="4.5"/><path d="M771.5 53 L775.5 57.2" stroke-width="1.6"/><path d="M765.8 49.7 L770.6 49.7"/>
 <circle cx="791.8" cy="49.7" r="4.5"/><path d="M795.1 53 L799.1 57.2" stroke-width="1.6"/>
 <circle cx="819.8" cy="49.7" r="4.5"/><path d="M823.1 53 L827.1 57.2" stroke-width="1.6"/><path d="M817.4 49.7 L822.2 49.7 M819.8 47.3 L819.8 52.1"/>
</g>
<g>
 <path d="M840.7 45.3 L847.8 45.3 L850.6 48.1 L850.6 56.7 L840.7 56.7 Z" fill="#eef1f5" stroke="#3b4658" stroke-width="1"/>
 <path d="M837.6 52.4 L843 52.4" stroke="#2a9a78" stroke-width="1.6"/>
 <path d="M842.5 49.6 L845.8 52.4 L842.5 55.2 Z" fill="#2a9a78"/>
</g>

<!-- MAX logo -->
<path d="M612.8 92.6 L621.1 71.2 L627.6 92.6 L622.2 92.6 L629.3 71.2 L637.9 92.6" stroke="#222" stroke-width="1" fill="none" stroke-linejoin="round"/>
<path d="M607.2 108.8 L610.6 95.6 L613.2 95.6 L614.3 100.6 L615.4 95.6 L618 95.6 L621.3 108.8 L618.7 108.8 L616.6 100.2 L615.3 106.2 L613.3 106.2 L612 100.2 L609.9 108.8 Z" fill="#1a1a1a"/>
<path d="M621.6 108.8 L627.8 95.6 L634 108.8 Z M626.7 106.7 L628.9 106.7 L627.8 104.2 Z" fill="#1a1a1a" fill-rule="evenodd"/>
<path d="M636.2 95.9 L646 108.5 M646 95.9 L636.2 108.5" stroke="#1a1a1a" stroke-width="2.7"/>
<text x="603" y="116.3" font-family="Liberation Sans" font-size="6" fill="#222" textLength="44.2" lengthAdjust="spacingAndGlyphs">MUSTERMANN</text>
</svg>
</body></html>
